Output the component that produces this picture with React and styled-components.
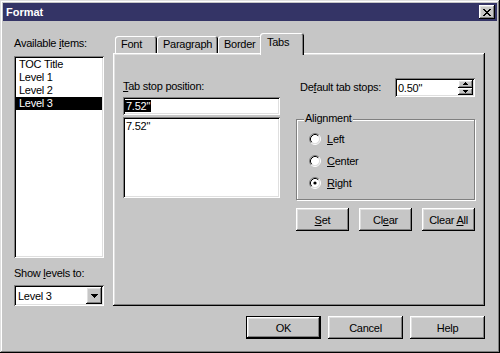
import styled, { createGlobalStyle, css } from "styled-components";

const GlobalStyle = createGlobalStyle`
  html, body { margin: 0; padding: 0; background: #c6c6c6; }
  body {
    font-family: "Liberation Sans", Arial, sans-serif;
    font-size: 11px;
    letter-spacing: -0.25px;
    color: #000;
  }
  * { box-sizing: border-box; }
  u { text-underline-offset: 1px; }
`;

const FACE = "#c6c6c6";

const raised = css`
  box-shadow: inset -1px -1px #000, inset 1px 1px #fff,
    inset -2px -2px #808080, inset 2px 2px #dfdfdf;
`;

const sunken = css`
  box-shadow: inset 1px 1px #808080, inset -1px -1px #fff,
    inset 2px 2px #000, inset -2px -2px #dfdfdf;
`;

const Window = styled.div`
  width: 500px;
  height: 353px;
  padding: 3px;
  display: flex;
  flex-direction: column;
  background: ${FACE};
  box-shadow: inset -1px -1px #000, inset 1px 1px #dfdfdf,
    inset -2px -2px #808080, inset 2px 2px #fff;
`;

const TitleBar = styled.div`
  height: 18px;
  display: flex;
  align-items: center;
  justify-content: space-between;
  padding: 0 2px 0 3px;
  background: #343466;
`;

const Title = styled.span`
  color: #fff;
  font-weight: bold;
  letter-spacing: 0;
`;

const CloseButton = styled.button`
  width: 16px;
  height: 14px;
  padding: 0;
  border: 0;
  background: ${FACE};
  display: flex;
  align-items: center;
  justify-content: center;
  ${raised}
`;

const Body = styled.div`
  padding: 12px 12px 0 11px;
  display: flex;
  flex-direction: column;
`;

const Main = styled.div`
  display: flex;
  height: 273px;
`;

const Side = styled.div`
  width: 90px;
  margin-right: 9px;
  padding-top: 4px;
  display: flex;
  flex-direction: column;
`;

const Label = styled.div`
  height: 13px;
  line-height: 13px;
  white-space: nowrap;
  margin-top: ${(p) => p.$mt || 0}px;
  margin-bottom: ${(p) => p.$mb || 0}px;
  padding-left: ${(p) => p.$pl || 0}px;
`;

const ListBox = styled.div`
  flex: 1;
  background: #fff;
  padding: 2px;
  ${sunken}
`;

const ListItem = styled.div`
  height: 13px;
  line-height: 13px;
  padding-left: 3px;
  white-space: nowrap;
  background: ${(p) => (p.$selected ? "#000" : "transparent")};
  color: ${(p) => (p.$selected ? "#fff" : "#000")};
`;

const Combo = styled.div`
  height: 21px;
  background: #fff;
  padding: 2px;
  display: flex;
  align-items: center;
  justify-content: space-between;
  ${sunken}
`;

const ComboText = styled.span`
  padding-left: 2px;
`;

const DropButton = styled.div`
  width: 16px;
  height: 17px;
  background: ${FACE};
  display: flex;
  align-items: center;
  justify-content: center;
  ${raised}
`;

const TabArea = styled.div`
  width: 372px;
  display: flex;
  flex-direction: column;
`;

const TabStrip = styled.div`
  height: 20px;
  padding-left: 2px;
  display: flex;
  align-items: flex-end;
`;

const Tab = styled.div`
  position: relative;
  z-index: ${(p) => (p.$active ? 1 : 0)};
  width: ${(p) => p.$w}px;
  height: ${(p) => (p.$active ? 22 : 17)}px;
  margin: 0 ${(p) => (p.$active ? -2 : 0)}px ${(p) => (p.$active ? -2 : 0)}px
    ${(p) => (p.$active ? -2 : 0)}px;
  padding: ${(p) => (p.$active ? "3px 0 0 7px" : "2px 0 0 6px")};
  line-height: 13px;
  white-space: nowrap;
  background: ${FACE};
  border-radius: 3px 3px 0 0;
  box-shadow: inset 1px 1px #fff, inset -1px 0 #000, inset -2px 0 #808080;
`;

const Panel = styled.div`
  flex: 1;
  padding: 25px 10px 0 10px;
  display: flex;
  gap: 16px;
  ${raised}
`;

const StopColumn = styled.div`
  width: 157px;
  display: flex;
  flex-direction: column;
`;

const TextField = styled.div`
  height: ${(p) => p.$h}px;
  margin-top: ${(p) => p.$mt || 0}px;
  background: #fff;
  padding: 3px 2px 0 2px;
  line-height: 13px;
  ${sunken}
`;

const Selected = styled.span`
  background: #000;
  color: #fff;
  padding: 0 1px;
`;

const FieldText = styled.span`
  padding-left: 1px;
`;

const OptionsColumn = styled.div`
  width: 179px;
  display: flex;
  flex-direction: column;
`;

const SpinRow = styled.div`
  height: 19px;
  display: flex;
  align-items: center;
  justify-content: space-between;
`;

const Spin = styled.div`
  width: 80px;
  height: 19px;
  background: #fff;
  padding: 2px;
  display: flex;
  align-items: center;
  justify-content: space-between;
  ${sunken}
`;

const SpinText = styled.span`
  padding-left: 1px;
`;

const SpinButtons = styled.div`
  width: 15px;
  height: 15px;
  display: flex;
  flex-direction: column;
`;

const SpinButton = styled.div`
  flex: 1;
  background: ${FACE};
  display: flex;
  align-items: center;
  justify-content: center;
  ${raised}
`;

const GroupBox = styled.div`
  height: 81px;
  margin-top: 22px;
  border: 1px solid #808080;
  box-shadow: inset 1px 1px #fff, 1px 1px #fff;
  display: flex;
  flex-direction: column;
`;

const Legend = styled.span`
  align-self: flex-start;
  margin: -8px 0 0 7px;
  padding: 0 1px;
  height: 13px;
  line-height: 13px;
  background: ${FACE};
`;

const RadioList = styled.div`
  margin-top: 3px;
  padding-left: 12px;
  display: flex;
  flex-direction: column;
`;

const RadioRow = styled.div`
  height: 22px;
  display: flex;
  align-items: center;
  gap: 6px;
`;

const ButtonRow = styled.div`
  margin-top: 8px;
  display: flex;
  justify-content: space-between;
`;

const Button = styled.button`
  width: ${(p) => p.$w}px;
  height: 23px;
  padding: 0;
  border: 0;
  font: inherit;
  letter-spacing: inherit;
  color: #000;
  background: ${FACE};
  ${(p) =>
    p.$default
      ? css`
          box-shadow: inset 0 0 0 1px #000, inset -2px -2px #000,
            inset 2px 2px #fff, inset -3px -3px #808080, inset 3px 3px #dfdfdf;
        `
      : raised}
`;

const Footer = styled.div`
  margin-top: 10px;
  display: flex;
  justify-content: flex-end;
  gap: 7px;
`;

function CloseGlyph() {
  return (
    <svg width="8" height="7" viewBox="0 0 8 7" shapeRendering="crispEdges">
      <path
        fill="#000"
        d="M0 0h2v1h-2zM6 0h2v1h-2zM1 1h2v1h-2zM5 1h2v1h-2zM2 2h4v1h-4zM3 3h2v1h-2zM2 4h4v1h-4zM1 5h2v1h-2zM5 5h2v1h-2zM0 6h2v1h-2zM6 6h2v1h-2z"
      />
    </svg>
  );
}

function Arrow({ up }) {
  return (
    <svg width="5" height="3" viewBox="0 0 5 3" shapeRendering="crispEdges">
      <path
        fill="#000"
        d={up ? "M2 0h1v1h-1zM1 1h3v1h-3zM0 2h5v1h-5z" : "M0 0h5v1h-5zM1 1h3v1h-3zM2 2h1v1h-1z"}
      />
    </svg>
  );
}

function ComboArrow() {
  return (
    <svg width="7" height="4" viewBox="0 0 7 4" shapeRendering="crispEdges">
      <path fill="#000" d="M0 0h7v1h-7zM1 1h5v1h-5zM2 2h3v1h-3zM3 3h1v1h-1z" />
    </svg>
  );
}

function Radio({ checked }) {
  return (
    <svg width="12" height="12" viewBox="0 0 12 12">
      <circle cx="6" cy="6" r="4.5" fill="#fff" />
      <path d="M2.11 9.89A5.5 5.5 0 0 1 9.89 2.11" stroke="#808080" fill="none" />
      <path d="M9.89 2.11A5.5 5.5 0 0 1 2.11 9.89" stroke="#fff" fill="none" />
      <path d="M2.82 9.18A4.5 4.5 0 0 1 9.18 2.82" stroke="#000" fill="none" />
      <path d="M9.18 2.82A4.5 4.5 0 0 1 2.82 9.18" stroke="#dfdfdf" fill="none" />
      {checked && <circle cx="6" cy="6" r="1.6" fill="#000" />}
    </svg>
  );
}

const items = ["TOC Title", "Level 1", "Level 2", "Level 3"];

const tabs = [
  { name: "Font", w: 42 },
  { name: "Paragraph", w: 61 },
  { name: "Border", w: 44 },
  { name: "Tabs", w: 44, active: true },
];

const alignments = [
  { key: "L", rest: "eft" },
  { key: "C", rest: "enter" },
  { key: "R", rest: "ight", checked: true },
];

export default function App() {
  return (
    <>
      <GlobalStyle />
      <Window>
        <TitleBar>
          <Title>Format</Title>
          <CloseButton>
            <CloseGlyph />
          </CloseButton>
        </TitleBar>
        <Body>
          <Main>
            <Side>
              <Label $mb={6}>
                Available <u>i</u>tems:
              </Label>
              <ListBox>
                {items.map((item) => (
                  <ListItem key={item} $selected={item === "Level 3"}>
                    {item}
                  </ListItem>
                ))}
              </ListBox>
              <Label $mt={9} $mb={5}>
                Show <u>l</u>evels to:
              </Label>
              <Combo>
                <ComboText>Level 3</ComboText>
                <DropButton>
                  <ComboArrow />
                </DropButton>
              </Combo>
            </Side>
            <TabArea>
              <TabStrip>
                {tabs.map((t) => (
                  <Tab key={t.name} $w={t.w} $active={t.active}>
                    {t.name}
                  </Tab>
                ))}
              </TabStrip>
              <Panel>
                <StopColumn>
                  <Label $mt={2}>
                    <u>T</u>ab stop position:
                  </Label>
                  <TextField $h={18} $mt={4}>
                    <Selected>7.52"</Selected>
                  </TextField>
                  <TextField $h={81} $mt={2}>
                    <FieldText>7.52"</FieldText>
                  </TextField>
                </StopColumn>
                <OptionsColumn>
                  <SpinRow>
                    <Label $pl={4}>
                      De<u>f</u>ault tab stops:
                    </Label>
                    <Spin>
                      <SpinText>0.50"</SpinText>
                      <SpinButtons>
                        <SpinButton>
                          <Arrow up />
                        </SpinButton>
                        <SpinButton>
                          <Arrow />
                        </SpinButton>
                      </SpinButtons>
                    </Spin>
                  </SpinRow>
                  <GroupBox>
                    <Legend>Alignment</Legend>
                    <RadioList>
                      {alignments.map((a) => (
                        <RadioRow key={a.key}>
                          <Radio checked={a.checked} />
                          <span>
                            <u>{a.key}</u>
                            {a.rest}
                          </span>
                        </RadioRow>
                      ))}
                    </RadioList>
                  </GroupBox>
                  <ButtonRow>
                    <Button $w={53}>
                      <u>S</u>et
                    </Button>
                    <Button $w={53}>
                      Cl<u>e</u>ar
                    </Button>
                    <Button $w={53}>
                      Clear <u>A</u>ll
                    </Button>
                  </ButtonRow>
                </OptionsColumn>
              </Panel>
            </TabArea>
          </Main>
          <Footer>
            <Button $w={75} $default>
              OK
            </Button>
            <Button $w={75}>Cancel</Button>
            <Button $w={75}>Help</Button>
          </Footer>
        </Body>
      </Window>
    </>
  );
}
